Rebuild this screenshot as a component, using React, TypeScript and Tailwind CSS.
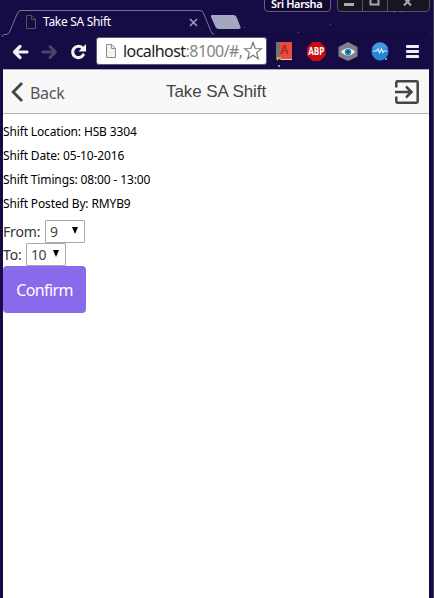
import type { ReactNode } from "react";

const ui = "font-['Noto_Sans',sans-serif]";

function PageIcon({ dark = false }: { dark?: boolean }) {
  return (
    <svg width="12" height="16" viewBox="0 0 12 16" className="block shrink-0">
      <path
        d="M1.5 1.5H7L10.5 5.5V14.5H1.5Z"
        fill={dark ? "none" : "#f4f4f4"}
        stroke={dark ? "#55535c" : "#8e8e8e"}
      />
      <path d="M6.5 1.5V5.5H10.5" fill="none" stroke={dark ? "#55535c" : "#8e8e8e"} />
    </svg>
  );
}

function TabStrip() {
  return (
    <div className="relative h-[37px] w-full shrink-0">
      <svg className="absolute inset-0" width="434" height="37" viewBox="0 0 434 37">
        <path
          d="M2.500 37V35.500L4 34.500H6Q8.500 34.500 10 31L17.500 13Q18.500 10.500 21 10.500H200Q202.500 10.500 203.500 13L211 31.500Q212 34.500 214.500 34.500"
          fill="none"
          stroke="#77718f"
        />
        <path d="M214 34.500H434" stroke="#120736" />
        <path
          d="M212 15H233Q236 15 237 18L240.500 27Q241 29 239 29H219Q216.500 29 215.500 27L211 17Q210.500 15 212 15Z"
          fill="#a5a6bf"
        />
        <g fill="#51508a">
          <rect x="244" y="27" width="1" height="1" />
          <rect x="298" y="32" width="1" height="1" />
          <rect x="330" y="24" width="1" height="1" />
          <rect x="394" y="12" width="1" height="1" />
          <rect x="401" y="12" width="1" height="1" />
          <rect x="430" y="33" width="1" height="1" />
        </g>
      </svg>
      <div className="relative flex h-full pl-[25px]">
        <div className="mt-[14px]"><PageIcon dark /></div>
        <span className={`${ui} ml-[6px] mt-[13px] w-[146px] whitespace-nowrap text-[12px] leading-[18px] tracking-[-0.3px] text-white`}>
          Take SA Shift
        </span>
        <svg className="mt-[18px]" width="9" height="9" viewBox="0 0 9 9">
          <path d="M1 1L8 8M8 1L1 8" stroke="#a5a2b3" strokeWidth="1.500" />
        </svg>
        <div className={`${ui} absolute left-[264px] top-[-2px] h-[14px] w-[67px] whitespace-nowrap rounded-b-[4px] border border-[#65607d] bg-[#130832] pl-[6px] text-[11px] font-semibold leading-[9px] tracking-[-0.4px] text-white`}>
          Sri Harsha
        </div>
        <svg className="absolute left-[337px] top-0" width="94" height="13" viewBox="0 0 94 13">
          <path d="M.500-2V8Q.500 11.500 4 11.500H89Q92.500 11.500 92.500 8V-2Z" fill="#17151f" stroke="#56516b" />
          <path d="M25.500 0V11M50.500 0V11" stroke="#56516b" />
          <rect x="7" y="3" width="10" height="3" fill="#aaa" />
          <path d="M33.500-2V4.500H41.500V-2" fill="none" stroke="#aaa" strokeWidth="2" />
          <path d="M67-2L74 5.500M74-2L67 5.500" stroke="#aaa" strokeWidth="2" />
        </svg>
      </div>
    </div>
  );
}

function Toolbar() {
  return (
    <div className="flex h-8 w-full shrink-0 items-start bg-[#170b45] pl-3">
      <svg className="mt-[6px]" width="17" height="18" viewBox="0 0 17 18">
        <path d="M15 9H3M8 3.500L2.500 9L8 14.500" fill="none" stroke="#f2f1f6" strokeWidth="3.200" strokeLinecap="round" strokeLinejoin="round" />
      </svg>
      <svg className="ml-[12px] mt-[6px]" width="17" height="18" viewBox="0 0 17 18">
        <path d="M2 9H14M9 3.500L14.500 9L9 14.500" fill="none" stroke="#4b4369" strokeWidth="3" strokeLinecap="round" strokeLinejoin="round" />
      </svg>
      <svg className="ml-[12px] mt-[6px]" width="18" height="18" viewBox="0 0 18 18">
        <path d="M13.200 12A5.700 5.700 0 1 1 12.500 5" fill="none" stroke="#f2f1f6" strokeWidth="3.100" strokeLinecap="round" />
        <path d="M16 1V8.500H8.500Z" fill="#f2f1f6" />
      </svg>
      <div className="ml-[8px] flex h-[28px] w-[171px] items-center rounded-[3px] border border-[#5e5878] bg-white pl-[8px]">
        <PageIcon />
        <span className={`${ui} ml-[6px] w-[120px] overflow-hidden whitespace-nowrap text-[16px] leading-[24px] tracking-[-0.56px] text-[#222]`}>
          localhost<span className="text-[#858585]">:8100/#,</span>
        </span>
        <svg className="shrink-0" width="20" height="20" viewBox="0 0 20 20">
          <path d="M10 1.500L12.200 7.500L18.500 7.700L13.600 11.600L15.300 17.800L10 14.200L4.700 17.800L6.400 11.600L1.500 7.700L7.800 7.500Z" fill="#fff" stroke="#777" strokeWidth="1.200" />
        </svg>
      </div>
      <svg className="ml-[8px] mt-[4px]" width="18" height="26" viewBox="0 0 18 26">
        <path d="M1 1H5V17L1 19Z" fill="#73737c" />
        <rect x="5" y="1" width="12" height="17" fill="#eb4b3d" />
        <path d="M6 18H17V19H6Z" fill="#d8d8dc" />
        <text x="5" y="13" fontFamily="Liberation Sans, sans-serif" fontSize="12" fontWeight="700" fill="#a52a24">A</text>
        <path d="M2 16H6V19L4 18L2 20Z" fill="#e9a526" />
        <rect x="3" y="24" width="2" height="2" fill="#7b8bb4" />
      </svg>
      <svg className="ml-[13px] mt-[4px]" width="20" height="20" viewBox="0 0 20 20">
        <path d="M6.500 1H14L19.500 6.500V14.500L14 20H6.500L1 14.500V6.500Z" fill="#c70d12" />
        <text x="10.300" y="14.300" textAnchor="middle" textLength="16" lengthAdjust="spacingAndGlyphs" fontFamily="Open Sans, sans-serif" fontSize="10.500" fontWeight="700" fill="#fff">ABP</text>
      </svg>
      <svg className="ml-[12px] mt-[5px]" width="20" height="20" viewBox="0 0 20 20">
        <path d="M10 0L19.500 5V14.500L10 19L.500 14.500V5Z" fill="#7e8286" />
        <path d="M3 10Q10 2.500 17 10Q10 17 3 10Z" fill="#fff" />
        <circle cx="10" cy="10" r="3.300" fill="#2591b5" />
        <circle cx="10" cy="10" r="1.400" fill="#12506d" />
      </svg>
      <svg className="ml-[13px] mt-[5px]" width="18" height="20" viewBox="0 0 18 20">
        <ellipse cx="9" cy="9.300" rx="8.500" ry="9.200" fill="#2885d2" />
        <path d="M1 6Q4 1 9 1Q14 1 17 6Q9 10 1 6Z" fill="#4399dd" />
        <path d="M2 9H5.500L7 7L8.500 11L10.500 7L12 10.500L13 9H16" fill="none" stroke="#e2f4ff" strokeWidth="1.100" />
        <circle cx="15" cy="17" r="1" fill="#91bfe4" />
      </svg>
      <svg className="ml-[17px] mt-[7px]" width="14" height="15" viewBox="0 0 14 15">
        <g fill="#f0f0f4">
          <rect y="1" width="13" height="3" rx="1" />
          <rect y="6" width="13" height="3" rx="1" />
          <rect y="11" width="13" height="3" rx="1" />
        </g>
      </svg>
    </div>
  );
}

function Detail({ children }: { children: ReactNode }) {
  return <p className="h-6 whitespace-nowrap text-[12px] leading-6 tracking-[-0.14px] text-black">{children}</p>;
}

function HourSelect({ label, value, width }: { label: string; value: string; width: string }) {
  return (
    <div className="flex h-[23px] items-center">
      <span className={`${width} whitespace-nowrap text-[14px] leading-[22px] tracking-[-0.15px] text-[#333]`}>{label}</span>
      <button className="flex h-[23px] w-[40px] items-center justify-between rounded-[1px] border border-[#a9a9a9] bg-white pl-[4px] pr-[6px] text-[14px] leading-[20px] tracking-[-0.4px] text-[#444]">
        <span>{value}</span>
        <svg width="6" height="7" viewBox="0 0 6 7" className="mb-[2px]"><path d="M0 0H6L3 7Z" fill="#000" /></svg>
      </button>
    </div>
  );
}

export default function App() {
  return (
    <div className="flex h-[598px] w-[434px] flex-col overflow-hidden border-r border-[#454352] bg-[#170b45]">
      <TabStrip />
      <Toolbar />
      <div className="ml-[3px] flex w-[426px] flex-1 flex-col bg-white">
        <header className="flex h-[45px] items-center border-b border-t border-b-[#b2b2b2] border-t-[#aaa8b4] bg-[#f8f8f8] pl-2">
          <svg width="13" height="20" viewBox="0 0 13 20" className="mt-[1px] shrink-0">
            <path d="M11 1L2.200 10L11 19" fill="none" stroke="#444" strokeWidth="2.800" />
          </svg>
          <span className={`${ui} ml-[6px] mt-[3px] w-[136px] text-[16px] leading-6 tracking-[-0.3px] text-[#555]`}>Back</span>
          <h1 className="w-[228px] whitespace-nowrap font-['Liberation_Sans',Arial,sans-serif] text-[17px] leading-6 tracking-[-0.08px] text-[#444]">Take SA Shift</h1>
          <svg width="26" height="26" viewBox="0 0 26 26" className="shrink-0">
            <path d="M2.300 8.500V3.500Q2.300 2.300 3.500 2.300H22.500Q23.700 2.300 23.700 3.500V22.500Q23.700 23.700 22.500 23.700H3.500Q2.300 23.700 2.300 22.500V17.500" fill="none" stroke="#444" strokeWidth="2.500" />
            <path d="M1 13H17.500M12 7.500L17.500 13L12 18.500" fill="none" stroke="#444" strokeWidth="2.500" />
          </svg>
        </header>
        <main className={`${ui} flex flex-col items-start pt-[6px]`}>
          <Detail>Shift Location: HSB 3304</Detail>
          <Detail>Shift Date: 05-10-2016</Detail>
          <Detail>Shift Timings: 08:00 - 13:00</Detail>
          <Detail>Shift Posted By: RMYB9</Detail>
          <div className="mt-[4px]">
            <HourSelect label="From:" value="9" width="w-[42px]" />
            <HourSelect label="To:" value="10" width="w-[23px]" />
          </div>
          <button className="h-[47px] w-[83px] rounded-[4px] bg-[#886aea] pt-px text-[16px] tracking-[-0.6px] text-white">Confirm</button>
        </main>
      </div>
    </div>
  );
}
